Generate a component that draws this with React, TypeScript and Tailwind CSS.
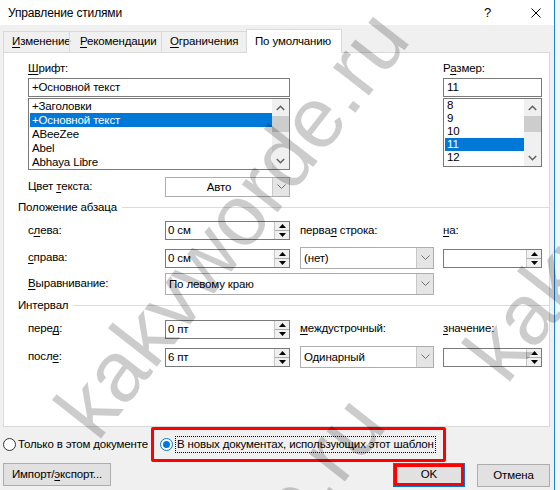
import type { ReactNode } from "react";

const UI = "font-['Liberation_Sans',Arial,sans-serif] text-[11.5px] tracking-[-0.15px] text-black";

function ComboArrow() {
  return (
    <svg width="9" height="6" viewBox="0 0 9 6">
      <path d="M0.5 0.5 L4.5 4.5 L8.5 0.5" fill="none" stroke="#707070" strokeWidth="1" />
    </svg>
  );
}

function ScrollArrow({ up }: { up?: boolean }) {
  return (
    <svg width="9" height="6" viewBox="0 0 9 6">
      <path
        d={up ? "M0.8 5 L4.5 1.3 L8.2 5" : "M0.8 1 L4.5 4.7 L8.2 1"}
        fill="none"
        stroke="#606060"
        strokeWidth="1.5"
      />
    </svg>
  );
}

function Spinner() {
  return (
    <div className="flex flex-col w-[15px] h-full border-l border-[#c8c8c8]">
      <div className="flex-1 flex items-center justify-center bg-[#f0f0f0] border-b border-[#adadad]">
        <svg width="7" height="4" viewBox="0 0 7 4"><path d="M0 4 L3.5 0 L7 4Z" fill="#000" /></svg>
      </div>
      <div className="flex-1 flex items-center justify-center bg-[#f0f0f0]">
        <svg width="7" height="4" viewBox="0 0 7 4"><path d="M0 0 L3.5 4 L7 0Z" fill="#000" /></svg>
      </div>
    </div>
  );
}

function Spin({ value = "", w }: { value?: string; w: string }) {
  return (
    <div className={`${w} h-[19px] flex border border-[#7a7a7a] bg-white`}>
      <span className="flex-1 pl-[2px] leading-[17px] whitespace-nowrap">{value}</span>
      <Spinner />
    </div>
  );
}

function Combo({ value, w }: { value: string; w: string }) {
  return (
    <div className={`${w} h-[22px] flex border border-[#adadad] bg-white`}>
      <span className="flex-1 leading-[20px] px-[3px] whitespace-nowrap">{value}</span>
      <div className="w-[17px] flex items-center justify-center bg-[#e5e5e5] border-l border-[#c8c8c8]">
        <ComboArrow />
      </div>
    </div>
  );
}

function U({ children }: { children: ReactNode }) {
  return <span className="underline underline-offset-2">{children}</span>;
}

function Heading({ children }: { children: ReactNode }) {
  return (
    <div className="flex items-center h-[16px]">
      <span className="leading-[16px] whitespace-nowrap">{children}</span>
      <div className="flex-1 ml-[5px] h-px bg-[#dcdcdc]" />
    </div>
  );
}

function Row({ h, label, c2, c3, c4, cls }: { h: string; label: ReactNode; c2: ReactNode; c3?: ReactNode; c4?: ReactNode; cls: string }) {
  return (
    <div className={`flex items-center pl-[10px] ${h} ${cls}`}>
      <div className="w-[137px] whitespace-nowrap">{label}</div>
      <div className="w-[125px] flex">{c2}</div>
      <div className="w-[134px] ml-[10px] flex whitespace-nowrap">{c3}</div>
      <div className="w-[99px] ml-[9px] flex whitespace-nowrap">{c4}</div>
    </div>
  );
}

function Radio({ on }: { on?: boolean }) {
  return (
    <span
      className={`w-[13px] h-[13px] rounded-full border bg-white flex items-center justify-center shrink-0 ${
        on ? "border-[#0078d7]" : "border-[#333333]"
      }`}
    >
      {on && <span className="w-[7px] h-[7px] rounded-full bg-[#0078d7]" />}
    </span>
  );
}

function ListBox({ items, sel, rowH, h, w }: { items: string[]; sel: number; rowH: string; h: string; w: string }) {
  return (
    <div className={`${w} ${h} mt-px flex border border-[#7a7a7a] bg-white`}>
      <div className="flex-1 flex flex-col pl-px">
        {items.map((it, i) => (
          <div
            key={it}
            className={`${rowH} pl-[2px] whitespace-nowrap ${i === sel ? "bg-[#0078d7] text-white" : ""}`}
          >
            {it}
          </div>
        ))}
      </div>
      <div className="w-[17px] bg-[#f0f0f0] flex flex-col items-center">
        <div className="h-[17px] flex items-center justify-center"><ScrollArrow up /></div>
        <div className="w-[17px] h-[16px] bg-[#cdcdcd]" />
        <div className="flex-1" />
        <div className="h-[17px] flex items-center justify-center"><ScrollArrow /></div>
      </div>
    </div>
  );
}

function Watermark({ x, y }: { x: number; y: number }) {
  return (
    <span
      className="absolute origin-top-left rotate-[-52deg] text-[86px] tracking-normal leading-none font-['Liberation_Sans',sans-serif] text-black/20 whitespace-nowrap pointer-events-none"
      style={{ left: x, top: y }}
    >
      kakvworde.ru
    </span>
  );
}

export default function App() {
  return (
    <div className={`relative w-[560px] h-[490px] overflow-hidden flex bg-white ${UI}`}>
      <div className="w-[555px] h-full flex flex-col bg-[#f0f0f0] border-r border-[#1883d7]">
        {/* title bar */}
        <div className="h-[25px] bg-white flex items-center pl-[8px]">
          <span className="flex-1 text-[12px]">Управление стилями</span>
          <span className="w-[10px] mr-[37px] text-[13px]">?</span>
          <svg width="10" height="10" viewBox="0 0 10 10" className="mr-[13px]">
            <path d="M0.5 0.5 L9.5 9.5 M9.5 0.5 L0.5 9.5" stroke="#000" strokeWidth="1" />
          </svg>
        </div>

        <div className="flex flex-col pl-[3px]">
          {/* tabs */}
          <div className="flex items-end h-[23px] mt-[4px] relative z-10 whitespace-nowrap">
            <div className="w-[67px] h-[21px] border border-b-0 border-[#d9d9d9] flex items-center pl-[8px]">
              <span><U>И</U>зменение</span>
            </div>
            <div className="w-[93px] h-[21px] -ml-px border border-b-0 border-[#d9d9d9] flex items-center pl-[10px]">
              <span><U>Р</U>екомендации</span>
            </div>
            <div className="w-[86px] h-[21px] -ml-px border border-b-0 border-[#d9d9d9] flex items-center pl-[8px]">
              <span><U>О</U>граничения</span>
            </div>
            <div className="w-[96px] h-[24px] -ml-px -mb-px border border-b-0 border-[#d9d9d9] bg-white flex items-center pl-[8px]">
              <span>По умолчанию</span>
            </div>
          </div>

          {/* panel */}
          <div className="w-[547px] h-[375px] border border-[#d9d9d9] bg-white flex flex-col pl-[14px]">
            <div className="flex pl-[10px] pt-[7px]">
              <div className="w-[262px] flex flex-col">
                <span className="h-[16px] leading-[16px]"><U>Ш</U>рифт:</span>
                <div className="mt-[2px] h-[19px] border border-[#7a7a7a] bg-white pl-[3px] leading-[17px]">+Основной текст</div>
                <ListBox
                  w="w-[262px]"
                  h="h-[72px]"
                  rowH="h-[14px] leading-[14px]"
                  sel={1}
                  items={["+Заголовки", "+Основной текст", "ABeeZee", "Abel", "Abhaya Libre"]}
                />
              </div>
              <div className="ml-[153px] w-[99px] flex flex-col">
                <span className="h-[16px] leading-[16px]">Р<U>а</U>змер:</span>
                <div className="mt-[2px] h-[19px] border border-[#7a7a7a] bg-white pl-[3px] leading-[17px]">11</div>
                <ListBox
                  w="w-[99px]"
                  h="h-[69px]"
                  rowH="h-[13px] leading-[13px]"
                  sel={3}
                  items={["8", "9", "10", "11", "12"]}
                />
              </div>
            </div>

            <div className="flex items-center pl-[10px] h-[20px] mt-[7px]">
              <span className="w-[137px]">Цвет <U>т</U>екста:</span>
              <div className="w-[125px] h-[20px] flex border border-[#adadad] bg-white">
                <span className="flex-1 text-center leading-[18px]">Авто</span>
                <div className="w-[17px] flex items-center justify-center bg-[#e5e5e5] border-l border-[#c8c8c8]">
                  <ComboArrow />
                </div>
              </div>
            </div>

            <div className="mt-[2px]"><Heading>Положение абзаца</Heading></div>
            <Row
              cls="mt-[6px]"
              h="h-[19px]"
              label={<span>с<U>л</U>ева:</span>}
              c2={<Spin w="w-[125px]" value="0 см" />}
              c3={<span>перва<U>я</U> строка:</span>}
              c4={<span><U>н</U>а:</span>}
            />
            <Row
              cls="mt-[7px]"
              h="h-[22px]"
              label={<span><U>с</U>права:</span>}
              c2={<Spin w="w-[125px]" value="0 см" />}
              c3={<Combo w="w-[134px]" value="(нет)" />}
              c4={<Spin w="w-[99px]" />}
            />
            <div className="flex items-center pl-[10px] h-[22px] mt-[4px]">
              <span className="w-[137px]"><U>В</U>ыравнивание:</span>
              <Combo w="w-[269px]" value="По левому краю" />
            </div>

            <div className="mt-[2px]"><Heading>Интервал</Heading></div>
            <Row
              cls="mt-[6px]"
              h="h-[20px]"
              label={<span>пере<U>д</U>:</span>}
              c2={<Spin w="w-[125px]" value="0 пт" />}
              c3={<span><U>м</U>еждустрочный:</span>}
              c4={<span><U>з</U>начение:</span>}
            />
            <Row
              cls="mt-[7px]"
              h="h-[22px]"
              label={<span>посл<U>е</U>:</span>}
              c2={<Spin w="w-[125px]" value="6 пт" />}
              c3={<Combo w="w-[134px]" value="Одинарный" />}
              c4={<Spin w="w-[99px]" />}
            />
          </div>

          {/* scope radios */}
          <div className="flex items-center h-[35px]">
            <div className="w-[148px] flex items-center gap-[2px]">
              <Radio />
              <span className="whitespace-nowrap">Только в этом документе</span>
            </div>
            <div className="w-[295px] h-[35px] border-[3px] border-[#ff0000] rounded-[2px] flex items-center pl-[6px]">
              <Radio on />
              <span className="ml-[2px] px-px leading-[15px] border border-dotted border-black whitespace-nowrap">
                В новых документах, использующих этот шаблон
              </span>
            </div>
          </div>

          {/* buttons */}
          <div className="flex items-start mt-px">
            <div className="w-[108px] h-[23px] border border-[#adadad] bg-[#e1e1e1] flex items-center justify-center">
              <span>Импорт/<U>э</U>кспорт...</span>
            </div>
            <div className="ml-[282px] w-[72px] h-[24px] border border-[#0078d7] bg-[#e1e1e1] flex">
              <div className="flex-1 border-[3px] border-[#ff0000] flex items-center justify-center">OK</div>
            </div>
            <div className="ml-[12px] mt-px w-[73px] h-[23px] border border-[#adadad] bg-[#e1e1e1] flex items-center justify-center">
              Отмена
            </div>
          </div>
        </div>
      </div>
      <div className="flex-1 bg-[#f4f6f9]" />

      <Watermark x={40} y={398} />
      <Watermark x={449} y={341} />
      <Watermark x={16} y={784} />
    </div>
  );
}
